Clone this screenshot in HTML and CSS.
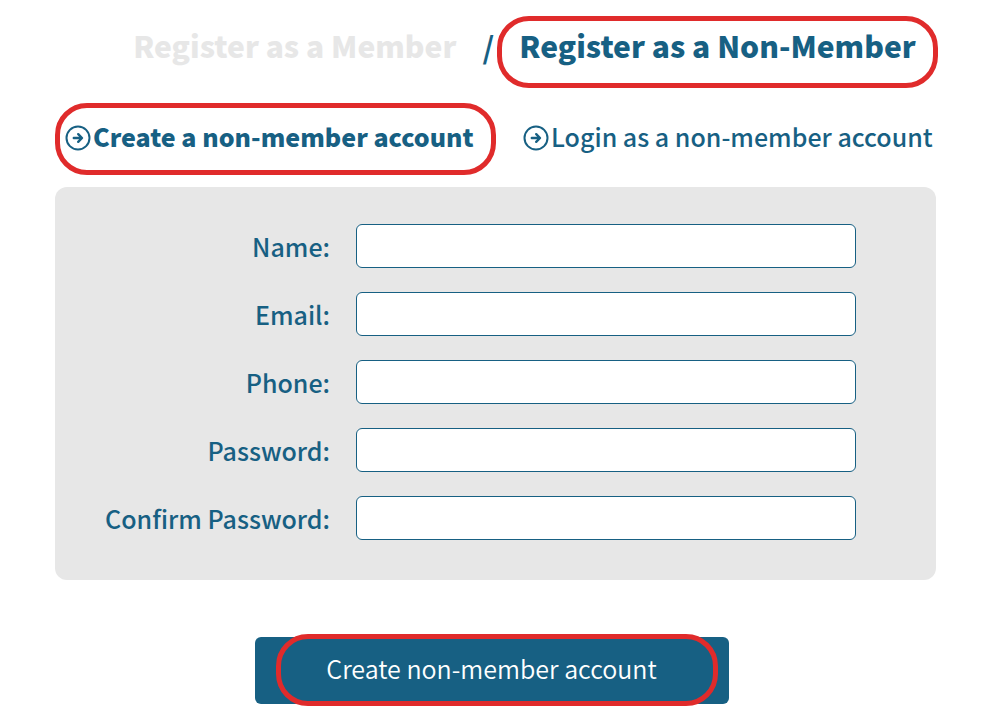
FILE: index.html
```html
<!DOCTYPE html>
<html lang="en">
<head>
    <meta charset="UTF-8">
    <meta name="viewport" content="width=device-width, initial-scale=1.0">
    <title>Register as a Non-Member</title>
    <link rel="stylesheet" href="styles.css">
</head>
<body>
    <main class="register">
        <nav class="type-tabs">
            <a href="#member" class="type-tab">Register as a Member</a>
            <span class="divider">/</span>
            <a href="#non-member" class="type-tab active highlight">Register as a Non-Member</a>
        </nav>
        <nav class="account-tabs">
            <a href="#create" class="account-tab active highlight">
                <svg class="icon" viewBox="0 0 26 26" aria-hidden="true">
                    <circle cx="13" cy="13" r="11.5"/>
                    <path class="arrow" d="M8.8 13h7.8M13.2 9.2l3.8 3.8-3.8 3.8"/>
                </svg>
                <span>Create a non-member account</span>
            </a>
            <a href="#login" class="account-tab">
                <svg class="icon" viewBox="0 0 26 26" aria-hidden="true">
                    <circle cx="13" cy="13" r="11.5"/>
                    <path class="arrow" d="M8.8 13h7.8M13.2 9.2l3.8 3.8-3.8 3.8"/>
                </svg>
                <span>Login as a non-member account</span>
            </a>
        </nav>
        <form id="create">
            <div class="fields">
                <label for="name">Name:</label>
                <input type="text" id="name" name="name">
                <label for="email">Email:</label>
                <input type="email" id="email" name="email">
                <label for="phone">Phone:</label>
                <input type="tel" id="phone" name="phone">
                <label for="password">Password:</label>
                <input type="password" id="password" name="password">
                <label for="confirm">Confirm Password:</label>
                <input type="password" id="confirm" name="confirm">
            </div>
            <div class="actions">
                <button type="submit" class="submit">Create non-member account</button>
            </div>
        </form>
    </main>
</body>
</html>
```
FILE: styles.css
```css
* { box-sizing: border-box; margin: 0; padding: 0; }
body {
    font-family: "Noto Sans CJK SC", "Noto Sans", sans-serif;
    font-size: 25px;
    line-height: 36px;
    color: #176083;
    background-color: #fff;
}
a {
    color: inherit;
    text-decoration: none;
    white-space: nowrap;
}
.register {
    padding: 16px 67px 20px 55px;
}
/* red ring around the current choice */
.highlight {
    width: 441px;
    height: 72px;
    border: 5px solid #e02b2b;
    border-radius: 32px;
}
.type-tabs {
    display: flex;
    justify-content: flex-end;
    align-items: center;
    font-size: 30px;
    font-weight: 900;
}
.type-tab {
    color: #e7e7e7;
    padding-bottom: 14px;
}
.type-tab.active {
    color: #176083;
    display: flex;
    align-items: center;
    justify-content: center;
}
.divider {
    margin: 0 3px 0 26px;
    padding-bottom: 12px;
    font-weight: bold;
}
.account-tabs {
    display: flex;
    align-items: center;
    gap: 27px;
    margin-top: 15px;
}
.account-tab {
    display: flex;
    align-items: center;
    gap: 2px;
    font-weight: 500;
}
.account-tab.active {
    font-weight: 900;
    padding-left: 5px;
}
.account-tab span { padding-bottom: 6px; }
.icon {
    width: 26px;
    height: 26px;
    margin-bottom: 2px;
    fill: none;
    stroke: #176083;
    stroke-width: 2;
    stroke-linecap: round;
    stroke-linejoin: round;
}
.icon .arrow { stroke-width: 2.4; }
.fields {
    display: grid;
    grid-template-columns: 275px 1fr;
    gap: 24px 26px;
    align-items: center;
    margin: 12px 2px 0 0;
    padding: 37px 80px 40px 0;
    border-radius: 12px;
    background-color: #e7e7e7;
}
.fields label {
    text-align: right;
    font-weight: 500;
}
.fields input {
    width: 100%;
    height: 44px;
    padding: 0 10px;
    border: 1px solid #176083;
    border-radius: 6px;
    background-color: #fff;
    font: inherit;
    color: inherit;
}
.actions {
    display: flex;
    justify-content: center;
    margin-top: 57px;
    padding-right: 10px;
}
.submit {
    position: relative;
    width: 474px;
    height: 67px;
    padding-bottom: 6px;
    border: none;
    border-radius: 6px;
    background-color: #176083;
    color: #fff;
    font: inherit;
    font-weight: 350;
    cursor: pointer;
}
.submit::after {
    content: "";
    position: absolute;
    top: -3px;
    left: 21px;
    box-sizing: border-box;
    width: 442px;
    height: 72px;
    border: 5px solid #e02b2b;
    border-radius: 32px;
}
```
